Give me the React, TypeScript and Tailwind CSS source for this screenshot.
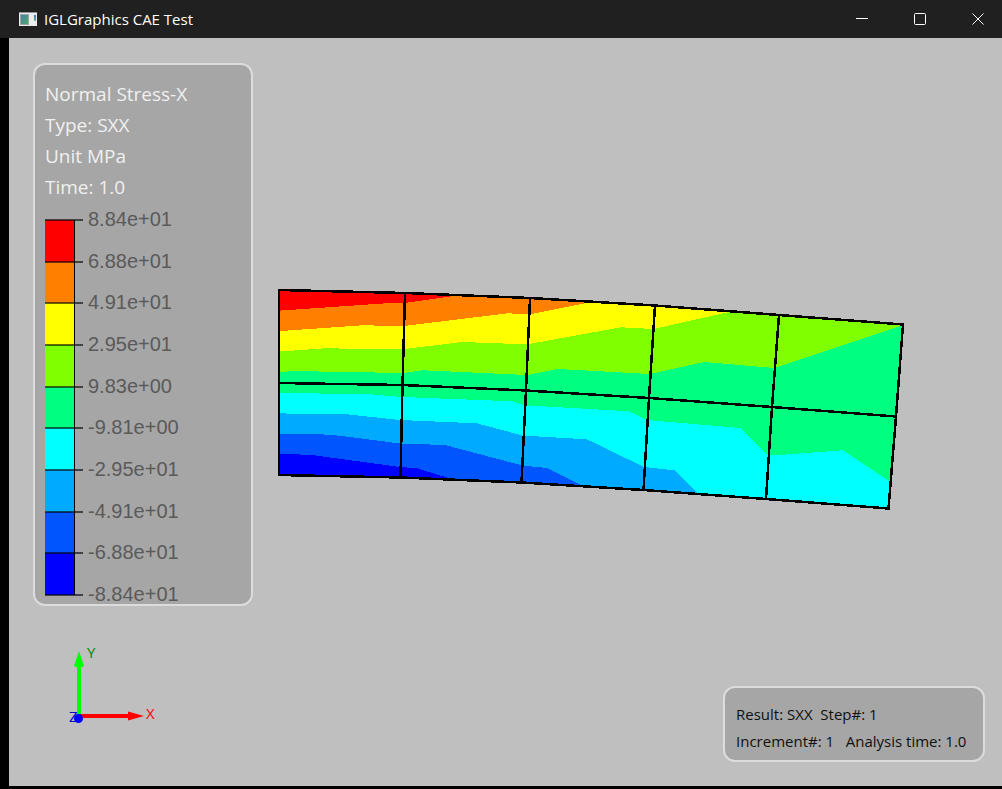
const SCALE_COLORS = [
  'bg-[#ff0000]',
  'bg-[#ff8000]',
  'bg-[#ffff00]',
  'bg-[#80ff00]',
  'bg-[#00ff80]',
  'bg-[#00ffff]',
  'bg-[#00aaff]',
  'bg-[#0055ff]',
  'bg-[#0000ff]',
];

const SCALE_LABELS = [
  '8.84e+01',
  '6.88e+01',
  '4.91e+01',
  '2.95e+01',
  '9.83e+00',
  '-9.81e+00',
  '-2.95e+01',
  '-4.91e+01',
  '-6.88e+01',
  '-8.84e+01',
];

const LEGEND_LINES = ['Normal Stress-X', 'Type: SXX', 'Unit MPa', 'Time: 1.0'];

const OUTLINE =
  '279,290 405,293 530,298 655,305.5 779,315 903,324.5 896,416.5 888.5,508.5 766,499 643.5,490 521.5,482.5 400.5,477.5 279,475';

// Each band covers everything below its upper contour; later bands paint over earlier ones.
const BANDS = [
  { fill: '#ff8000', points: '270,311.5 281,310.5 390,303 404,303 457,295.5 910,280 910,520 270,520' },
  { fill: '#ffff00', points: '270,332 281,331 362,325.3 403.5,326 508,313.3 530,314.3 591,302 910,290 910,520 270,520' },
  { fill: '#80ff00', points: '270,352.5 281,351.4 325,348.3 402,349.4 462,342 527,344.4 621,327.3 653.5,329 729,312 910,300 910,520 270,520' },
  { fill: '#00ff80', points: '270,373 281,372.4 291,371 403,373 423,370.3 527,375 558,369 650,374 704,362 775,368 903,325 910,323 910,520 270,520' },
  { fill: '#00ffff', points: '270,393 367,394 402,397 512,401.3 525,405.3 629,411.3 647,420 740,428 767.5,454.5 779,455 843,450.3 889.5,481.3 910,495 910,520 270,520' },
  { fill: '#00aaff', points: '270,413.3 347,414.3 400,420 477,423.3 522.5,435.5 587,439.3 644,467 674.5,470.3 699,494 720,520 270,520' },
  { fill: '#0055ff', points: '270,434 317,434 340,435.7 400,443.5 445,445 522.5,465.5 547,468 583,486 600,520 270,520' },
  { fill: '#0000ff', points: '270,453 281,453.7 312,455 400,467 417,468.3 455,480 480,520 270,520' },
];

const GRID_LINES = [
  '279,383 402.5,385 526,390.5 649,398 772,407 896,416.5',
  '405,293 402.5,385 400.5,477.5',
  '530,298 526,390.5 521.5,482.5',
  '655,305.5 649,398 643.5,490',
  '779,315 772,407 766,499',
];

function TitleBar() {
  return (
    <header className="flex h-[38px] items-center bg-[#202020] pl-[19px] text-white">
      <svg width="18" height="14" viewBox="0 0 18 14" aria-hidden="true">
        <defs>
          <linearGradient id="pane" x1="0" y1="0" x2="1" y2="1">
            <stop offset="0" stopColor="#4a7fa5" />
            <stop offset="1" stopColor="#4fa968" />
          </linearGradient>
          <linearGradient id="strip" x1="0" y1="0" x2="0" y2="1">
            <stop offset="0" stopColor="#3f6fb5" />
            <stop offset="1" stopColor="#6fb59a" />
          </linearGradient>
        </defs>
        <rect width="18" height="14" fill="#ececec" />
        <rect width="18" height="1" fill="#8f949c" />
        <rect x="1" y="2" width="9" height="11" fill="#9aa5a8" />
        <rect x="2" y="3" width="7" height="9" fill="url(#pane)" />
        <rect x="15" y="3" width="2" height="6" fill="url(#strip)" />
      </svg>
      <h1 className="pl-[7px] text-[15px] leading-5">IGLGraphics CAE Test</h1>
      <div className="ml-auto flex h-full">
        <button type="button" aria-label="Minimize" className="grid w-[58px] place-items-center">
          <svg width="12" height="12" viewBox="0 0 12 12" stroke="currentColor" fill="none">
            <path d="M0 5.5h12" />
          </svg>
        </button>
        <button type="button" aria-label="Maximize" className="grid w-[58px] place-items-center">
          <svg width="12" height="12" viewBox="0 0 12 12" stroke="currentColor" fill="none">
            <rect x="0.5" y="0.5" width="11" height="11" rx="1" />
          </svg>
        </button>
        <button type="button" aria-label="Close" className="grid w-[53px] place-items-center pl-1">
          <svg width="12" height="12" viewBox="0 0 12 12" stroke="currentColor" fill="none">
            <path d="M0.5 0.5l11 11M11.5 0.5l-11 11" />
          </svg>
        </button>
      </div>
    </header>
  );
}

function Legend() {
  return (
    <section className="w-[220px] rounded-xl border-2 border-[#dcdcdc] bg-[#a6a6a6] px-[10px] pt-[14px] pb-[9px]">
      {LEGEND_LINES.map((line) => (
        <p key={line} className="text-[19px] leading-[31px] text-[#f0f0f0]">
          {line}
        </p>
      ))}
      <div className="mt-[17px] grid h-[375px]">
        <div className="col-start-1 row-start-1 flex w-[30px] flex-col border-r border-black">
          {SCALE_COLORS.map((color) => (
            <div key={color} className={`flex-1 ${color}`} />
          ))}
        </div>
        <ul className="col-start-1 row-start-1 -mt-[13px] -mb-[11px] flex flex-col justify-between font-['Liberation_Sans',Arial,sans-serif] text-[20px] leading-6 text-[#5a5a5a]">
          {SCALE_LABELS.map((label) => (
            <li key={label} className="flex h-6 items-center gap-[5px]">
              <span className="mt-[2px] h-[2px] w-[38px] bg-black/60" />
              {label}
            </li>
          ))}
        </ul>
      </div>
    </section>
  );
}

function AxisTriad() {
  return (
    <svg
      className="ml-[35px]"
      width="92"
      height="86"
      viewBox="68 639 92 86"
      role="img"
      aria-label="Axis orientation"
      fontSize="15"
    >
      <rect x="77" y="666" width="4" height="50" fill="#00ff00" />
      <path d="M79 651l5 15q-5 3-10 0z" fill="#00ff00" />
      <rect x="80" y="714" width="50" height="4" fill="#ff0000" />
      <path d="M128 711.5l16 4.5-16 4.5z" fill="#ff0000" />
      <text x="87" y="658" fill="#008a00">Y</text>
      <text x="146" y="719" fill="#ff0000">X</text>
      <text x="69" y="722" fill="#0000cc">Z</text>
      <circle cx="78.5" cy="718.5" r="4.5" fill="#0000ff" />
    </svg>
  );
}

function StressPlot() {
  return (
    <svg width="628" height="223" viewBox="277 288 628 223" role="img" aria-label="Normal stress contour plot">
      <clipPath id="beam">
        <polygon points={OUTLINE} />
      </clipPath>
      <g clipPath="url(#beam)" shapeRendering="crispEdges">
        <polygon points={OUTLINE} fill="#ff0000" />
        {BANDS.map((band) => (
          <polygon key={band.fill} points={band.points} fill={band.fill} />
        ))}
      </g>
      <g fill="none" stroke="#000" strokeWidth="2.5" shapeRendering="crispEdges">
        <polygon points={OUTLINE} />
        {GRID_LINES.map((points) => (
          <polyline key={points} points={points} />
        ))}
      </g>
    </svg>
  );
}

function ResultInfo() {
  return (
    <section className="mr-[17px] mb-6 w-[262px] self-end rounded-xl border-2 border-[#dcdcdc] bg-[#a6a6a6] px-[11px] pt-[13px] pb-[5px] text-[15px] leading-[27px] whitespace-pre text-[#101010]">
      <p>Result: SXX  Step#: 1</p>
      <p>Increment#: 1   Analysis time: 1.0</p>
    </section>
  );
}

export default function App() {
  return (
    <div className="flex min-h-screen flex-col bg-black font-['Open_Sans','Noto_Sans',sans-serif]">
      <TitleBar />
      <main className="mb-[3px] ml-[9px] flex flex-1 bg-[#bfbfbf]">
        <aside className="flex flex-col gap-[33px] pt-[25px] pl-6">
          <Legend />
          <AxisTriad />
        </aside>
        <div className="flex flex-1 flex-col justify-between pt-[250px] pl-6">
          <StressPlot />
          <ResultInfo />
        </div>
      </main>
    </div>
  );
}
